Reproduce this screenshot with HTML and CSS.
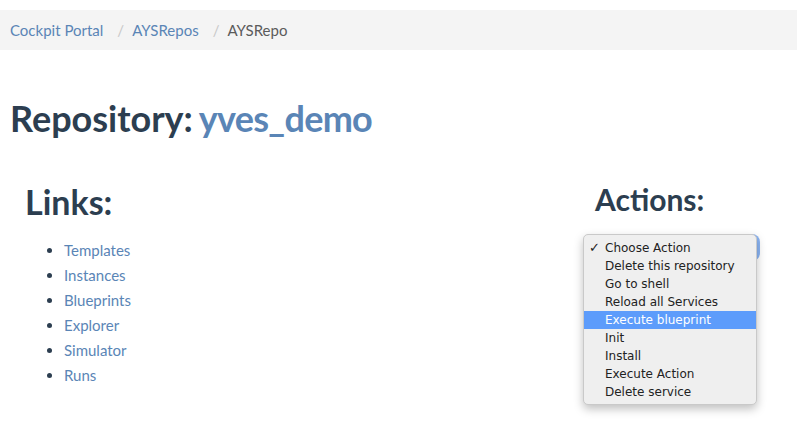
FILE: index.html
```html
<!DOCTYPE html>
<html>
<head>
<meta charset="utf-8">
<link rel="stylesheet" href="styles.css">
</head>
<body>
<nav class="breadcrumb">
  <a href="#" class="crumb">Cockpit Portal</a>
  <span class="sep">/</span>
  <a href="#" class="crumb">AYSRepos</a>
  <span class="sep">/</span>
  <span class="crumb active">AYSRepo</span>
</nav>
<h1 class="title">Repository: <a href="#">yves_demo</a></h1>
<div class="row">
  <section class="links">
    <h2>Links:</h2>
    <ul>
      <li><a href="#">Templates</a></li>
      <li><a href="#">Instances</a></li>
      <li><a href="#">Blueprints</a></li>
      <li><a href="#">Explorer</a></li>
      <li><a href="#">Simulator</a></li>
      <li><a href="#">Runs</a></li>
    </ul>
  </section>
  <section class="actions">
    <h2>Actions:</h2>
    <div class="select-wrap">
      <div class="select-box"></div>
      <ul class="menu">
        <li class="checked">Choose Action</li>
        <li>Delete this repository</li>
        <li>Go to shell</li>
        <li>Reload all Services</li>
        <li class="hl">Execute blueprint</li>
        <li>Init</li>
        <li>Install</li>
        <li>Execute Action</li>
        <li>Delete service</li>
      </ul>
    </div>
  </section>
</div>
</body>
</html>
```
FILE: styles.css
```css
html, body {
  margin: 0;
  padding: 0;
  background: #fff;
}
body {
  font-family: Lato, "Open Sans", sans-serif;
  color: #2c3e50;
  font-size: 15px;
  min-height: 433px;
}
a {
  color: #5a85b6;
  text-decoration: none;
}
.breadcrumb {
  margin-top: 10px;
  height: 40px;
  background: #f4f4f4;
  padding: 0 10px;
  display: flex;
  align-items: center;
  font-size: 15px;
}
.sep {
  color: #c8c8c8;
  padding: 0 8px 0 14px;
}
.crumb.active {
  color: #5b5b5b;
}
.title {
  margin: 48px 10px 0;
  font-size: 36px;
  font-weight: 700;
  line-height: 40px;
  color: #2c3e50;
}
.title a {
  letter-spacing: -0.7px;
  margin-left: -3px;
}
.row {
  display: flex;
  padding: 0 10px;
  min-height: 295px;
}
.row h2 {
  font-weight: 700;
  margin: 0;
  color: #2c3e50;
}
.links {
  padding-left: 15px;
  width: 570px;
  margin-top: 45px;
}
.links h2 {
  font-size: 34px;
  line-height: 38px;
}
.links ul {
  margin: 17px 0 0;
  padding-left: 39px;
  line-height: 25px;
}
.actions {
  margin-top: 44px;
  flex: 1;
}
.actions h2 {
  font-size: 30px;
  line-height: 34px;
}
.select-wrap {
  position: relative;
  margin-top: 21px;
  margin-left: -12px;
  width: 177px;
  height: 22px;
}
.select-box {
  height: 21px;
  margin-left: 4px;
  width: 170px;
  border-radius: 5px;
  box-shadow: 0 0 0 3px rgba(90, 150, 240, 0.7);
  background: #fff;
}
.menu {
  position: absolute;
  top: -3px;
  left: 0;
  width: 174px;
  margin: 0;
  padding: 4px 0 5px;
  list-style: none;
  background: #efefef;
  border: 1px solid #c9c9c9;
  border-radius: 5px;
  box-shadow: 0 4px 10px rgba(0, 0, 0, 0.25);
  font-family: "DejaVu Sans", sans-serif;
  font-size: 12px;
  color: #222;
  box-sizing: border-box;
  height: 171px;
}
.menu li {
  height: 18px;
  line-height: 18px;
  padding-left: 21px;
  position: relative;
}
.menu li.checked::before {
  content: "\2713";
  position: absolute;
  left: 5px;
  font-size: 13px;
  font-weight: 700;
}
.menu li.hl {
  background: #5d9cfb;
  color: #fff;
}
```
